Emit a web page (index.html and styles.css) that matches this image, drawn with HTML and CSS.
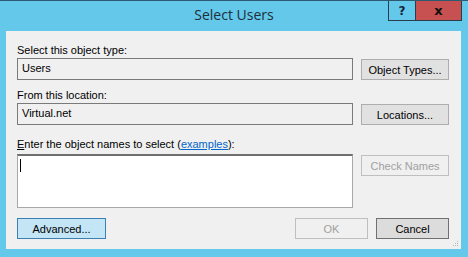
FILE: index.html
```html
<!DOCTYPE html>
<html lang="en">
<head>
  <meta charset="UTF-8">
  <title>Select Users</title>
  <link rel="stylesheet" href="styles.css">
</head>
<body>
  <div class="window">
    <header class="titlebar">
      <span></span>
      <span class="title">Select Users</span>
      <div class="caption-buttons">
        <span class="caption-btn help">?</span>
        <span class="caption-btn close">x</span>
      </div>
    </header>

    <main class="panel">
      <div class="label label-first">Select this object type:</div>
      <div class="row">
        <div class="field">Users</div>
        <button class="btn">Object Types...</button>
      </div>

      <div class="label">From this location:</div>
      <div class="row">
        <div class="field">Virtual.net</div>
        <button class="btn">Locations...</button>
      </div>

      <div class="label label-names"><u>E</u>nter the object names to select (<a href="#">examples</a>):</div>
      <div class="row">
        <div class="names"><span class="caret"></span></div>
        <button class="btn disabled">Check Names</button>
      </div>

      <div class="footer">
        <button class="btn advanced">Advanced...</button>
        <div class="footer-right">
          <button class="btn small disabled">OK</button>
          <button class="btn small cancel">Cancel</button>
        </div>
      </div>
      <!-- resize grip -->
      <svg class="grip" width="6" height="6" viewBox="0 0 6 6">
        <rect x="4" y="0" width="1" height="1" fill="#b8b8b8"/>
        <rect x="2" y="2" width="1" height="1" fill="#b8b8b8"/>
        <rect x="4" y="2" width="1" height="1" fill="#b8b8b8"/>
        <rect x="0" y="4" width="1" height="1" fill="#b8b8b8"/>
        <rect x="2" y="4" width="1" height="1" fill="#b8b8b8"/>
        <rect x="4" y="4" width="1" height="1" fill="#b8b8b8"/>
      </svg>
    </main>
  </div>
</body>
</html>
```

FILE: styles.css
```css
body {
  margin: 0;
  padding: 0;
  background-color: #64c8ea;
  font-family: "Liberation Sans", Arial, sans-serif;
  font-size: 11px;
  color: #000;
}

.window {
  width: 468px;
  height: 257px;
  border-top: 1px solid #2d5a70;
  box-sizing: border-box;
}

.titlebar {
  display: grid;
  grid-template-columns: 1fr auto 1fr;
  height: 30px;
}

.title {
  font-family: "Open Sans", "Noto Sans", sans-serif;
  font-size: 14px;
  color: #1c2f3a;
  line-height: 24px;
  padding-top: 2px;
}

.caption-buttons {
  justify-self: end;
  display: flex;
  margin-right: 6px;
  height: 20px;
}

.caption-btn {
  display: flex;
  align-items: center;
  justify-content: center;
  font-family: "DejaVu Sans", sans-serif;
  font-weight: bold;
  font-size: 12px;
  box-sizing: border-box;
  border: 1px solid #2a3d4c;
  border-top: none;
}

.help {
  width: 28px;
  color: #14233a;
}

.close {
  width: 46px;
  background-color: #c75050;
  border-left: none;
  color: #111;
  font-size: 13px;
}

.panel {
  position: relative;
  display: flow-root;
  margin: 0 7px 0 6px;
  height: 218px;
  background-color: #f0f0f0;
  padding: 11px 12px 0 11px;
  box-sizing: border-box;
}

.label {
  height: 16px;
  line-height: 16px;
  margin-top: 7px;
  color: #000;
}

.label-first {
  margin-top: 0;
}

.label-names {
  margin-top: 11px;
  margin-bottom: 2px;
}

.label a {
  color: #0066cc;
}

.row {
  display: flex;
  gap: 8px;
  align-items: flex-start;
}

.field {
  width: 336px;
  height: 22px;
  box-sizing: border-box;
  border: 1px solid #7a7a7a;
  background-color: #f0f0f0;
  padding: 0 4px;
  line-height: 18px;
}

.names {
  width: 336px;
  height: 54px;
  box-sizing: border-box;
  border: 1px solid #a8a8a8;
  border-top: 2px solid #6f6f6f;
  background-color: #fff;
  padding: 3px 2px;
}

.caret {
  display: block;
  width: 1px;
  height: 13px;
  background-color: #000;
}

.btn {
  width: 88px;
  height: 21px;
  margin-top: 1px;
  box-sizing: border-box;
  border: 1px solid #adadad;
  background-color: #e1e1e1;
  font-family: "Liberation Sans", Arial, sans-serif;
  font-size: 11px;
  color: #000;
  padding: 0;
  border-radius: 0;
}

.btn.disabled {
  background-color: #f0f0f0;
  border-color: #bfbfbf;
  color: #a0a0a0;
}

.footer {
  display: flex;
  justify-content: space-between;
  margin-top: 10px;
}

.footer .btn {
  margin-top: 0;
}

.footer-right {
  display: flex;
  gap: 8px;
}

.btn.advanced {
  width: 89px;
  background-color: #c4e5f6;
  border-color: #3c7fb1;
}

.btn.small {
  width: 73px;
}

.btn.cancel {
  border-color: #707070;
  background-color: #dcdcdc;
}

.grip {
  position: absolute;
  right: 2px;
  bottom: 2px;
}
```
